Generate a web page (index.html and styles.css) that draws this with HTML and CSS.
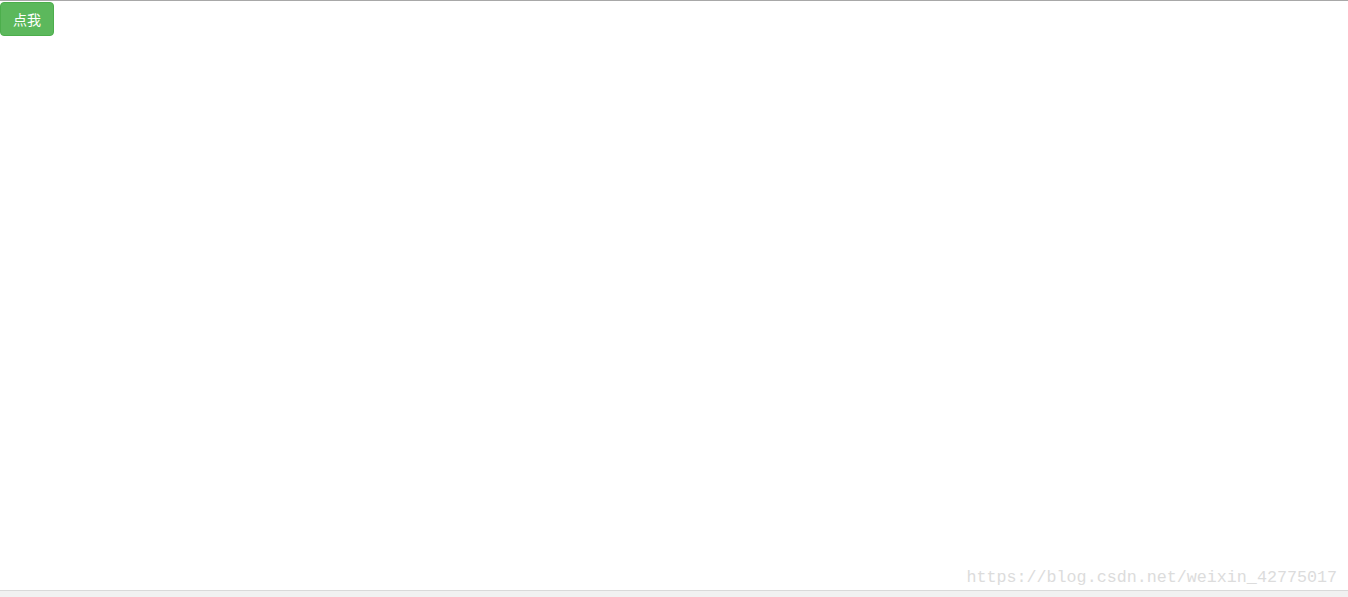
FILE: index.html
```html
<!DOCTYPE html>
<html lang="zh-CN">
<head>
    <meta charset="UTF-8">
    <meta name="viewport" content="width=device-width, initial-scale=1.0">
    <title>点我</title>
    <link rel="stylesheet" href="styles.css">
</head>
<body>
    <div class="page">
        <div class="content">
            <button class="btn btn-success">点我</button>
        </div>
        <div class="watermark">https://blog.csdn.net/weixin_42775017</div>
        <div class="bottom-bar"></div>
    </div>
</body>
</html>
```

FILE: styles.css
```css
/* General Styles */
html, body {
    margin: 0;
    padding: 0;
    height: 100%;
}

body {
    font-family: "Liberation Sans", "Noto Sans CJK SC", sans-serif;
    background: #fff;
}

.page {
    display: flex;
    flex-direction: column;
    height: 100vh;
    border-top: 1px solid #a8a8a8;
    box-sizing: border-box;
}

.content {
    flex: 1;
    padding-top: 1px;
}

/* Button */
.btn {
    display: inline-block;
    padding: 6px 12px;
    font-size: 14px;
    line-height: 20px;
    border: 1px solid transparent;
    border-radius: 4px;
    font-family: "Noto Sans CJK SC", sans-serif;
    cursor: pointer;
}

.btn-success {
    color: #fff;
    background-color: #5cb85c;
    border-color: #4cae4c;
}

.btn-success:hover {
    background-color: #449d44;
}

/* Watermark */
.watermark {
    align-self: flex-end;
    margin-right: 11px;
    margin-bottom: 2px;
    font-family: "Liberation Mono", monospace;
    font-size: 16.7px;
    line-height: 20px;
    color: #dcdcdc;
}

.bottom-bar {
    height: 6px;
    border-top: 1px solid #d9d9d9;
    background: #f1f1f1;
}
```
